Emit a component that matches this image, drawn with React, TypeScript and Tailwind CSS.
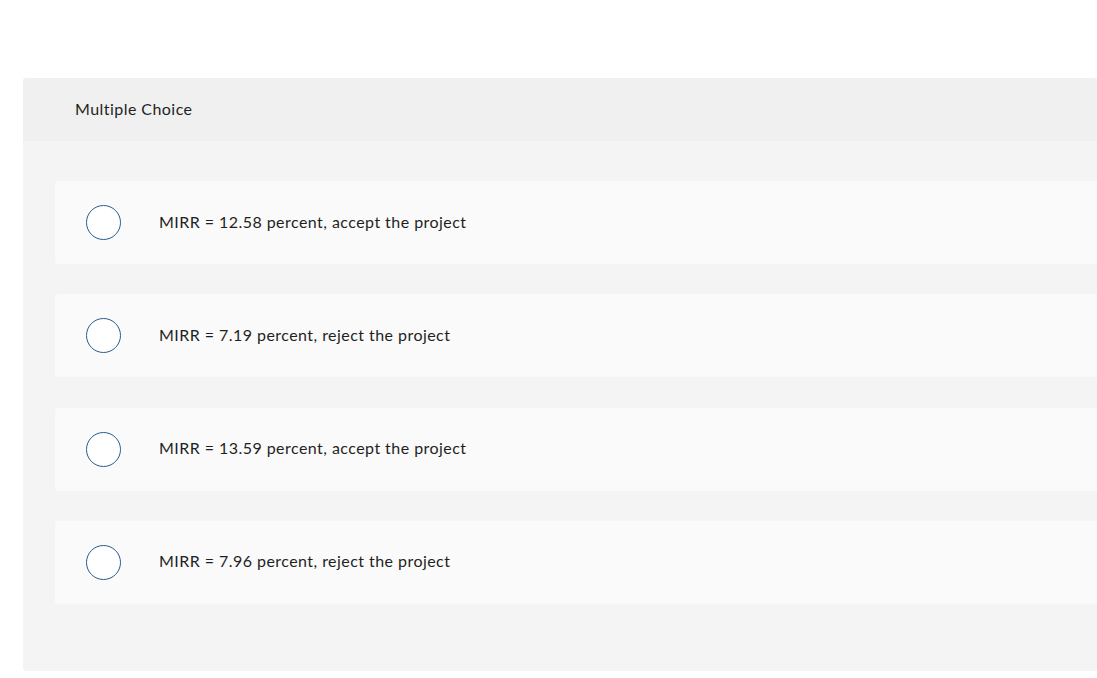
const choices = [
  'MIRR = 12.58 percent, accept the project',
  'MIRR = 7.19 percent, reject the project',
  'MIRR = 13.59 percent, accept the project',
  'MIRR = 7.96 percent, reject the project',
]

export default function App() {
  return (
    <div className="min-h-[678px] bg-white pt-[78px] pl-[23px]" style={{ fontFamily: 'Lato, "Noto Sans", sans-serif' }}>
      <div className="rounded-[3px] bg-[#f4f4f4] pb-[67px] text-[16px] tracking-[0.45px] text-[#1f1f1f]">
        <div className="flex h-[63px] items-center rounded-t-[3px] bg-[#f0f0f0] pb-[2px] pl-[52px]">
          Multiple Choice
        </div>
        <div className="flex flex-col gap-[30.33px] pt-[40px] pl-[32px]">
          {choices.map((c, i) => (
            <div key={i} className="flex h-[83px] items-center rounded-l-[3px] bg-[#fafafa] pl-[31px]">
              <span className="h-[35px] w-[35px] shrink-0 rounded-full border-[1.5px] border-[#2a5c8c] bg-white"></span>
              <span className="ml-[38px] pb-[2px]">{c}</span>
            </div>
          ))}
        </div>
      </div>
    </div>
  )
}
